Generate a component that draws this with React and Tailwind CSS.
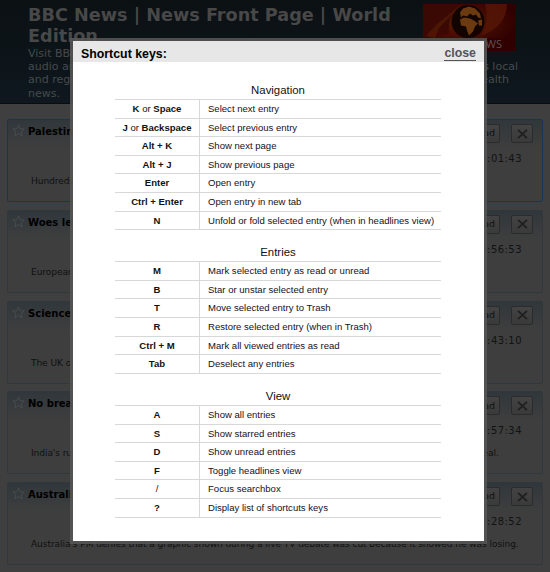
import React from "react";

const SECTIONS = [
  {
    title: "Navigation",
    rows: [
      [["K", " or ", "Space"], "Select next entry"],
      [["J", " or ", "Backspace"], "Select previous entry"],
      [["Alt + K"], "Show next page"],
      [["Alt + J"], "Show previous page"],
      [["Enter"], "Open entry"],
      [["Ctrl + Enter"], "Open entry in new tab"],
      [["N"], "Unfold or fold selected entry (when in headlines view)"],
    ],
  },
  {
    title: "Entries",
    rows: [
      [["M"], "Mark selected entry as read or unread"],
      [["B"], "Star or unstar selected entry"],
      [["T"], "Move selected entry to Trash"],
      [["R"], "Restore selected entry (when in Trash)"],
      [["Ctrl + M"], "Mark all viewed entries as read"],
      [["Tab"], "Deselect any entries"],
    ],
  },
  {
    title: "View",
    rows: [
      [["A"], "Show all entries"],
      [["S"], "Show starred entries"],
      [["D"], "Show unread entries"],
      [["F"], "Toggle headlines view"],
      [["/"], "Focus searchbox"],
      [["?"], "Display list of shortcuts keys"],
    ],
  },
];

const ENTRIES = [
  { title: "Palestinians", time: "20:01:43", left: "Hundreds", right: "", selected: true },
  { title: "Woes left", time: "19:56:53", left: "European", right: "" },
  { title: "Science", time: "19:43:10", left: "The UK over", right: "" },
  { title: "No breakthrough", time: "18:57:34", left: "India's ruling", right: "deal." },
  {
    title: "Australia",
    time: "18:28:52",
    left: "Australia's PM denies that a graphic shown during a live TV debate was cut because it showed he was losing.",
    right: "",
  },
];

const BLURB = [
  ["Visit BBC News", ""],
  ["audio and", "as local"],
  ["and regional", "health", "pr-[9px]"],
  ["news.", ""],
];

function Logo() {
  return (
    <svg className="mt-[4px] h-[47px] w-[93px] shrink-0" viewBox="0 0 93 47">
      <defs>
        <radialGradient id="glow" cx="0.4" cy="0.4" r="0.6">
          <stop offset="0" stopColor="#5c1a05" />
          <stop offset="0.6" stopColor="#400a02" />
          <stop offset="1" stopColor="#300000" />
        </radialGradient>
      </defs>
      <rect width="93" height="47" fill="url(#glow)" />
      <path d="M0 0H36Q24 12 26 30L0 34Z" fill="#3b0903" />
      <path d="M3 32L14 20L38 1L16 24L12 34Z" fill="#5e2408" opacity=".5" />
      <path d="M62 0H84Q84 22 58 32Q67 16 62 0Z" fill="#561706" opacity=".8" />
      <circle cx="45" cy="17.5" r="16.5" fill="#120400" />
      <g transform="translate(0 1.5)" fill="#6b3a10">
        <path d="M37 7L40 3L46 1L52 3L57 8L58 13L55 12L53 9L50 10L47 8L44 11L40 10L38 12Z" />
        <path d="M37 14L41 12L47 13L51 15L55 18L52 21L50 26L46 30L44 25L43 21L38 20Z" />
        <path d="M55 15L59 14L59 20L56 20Z" />
      </g>
      <rect y="34" width="93" height="13" fill="#300000" />
      <text x="79" y="43.5" textAnchor="end" fontSize="11" fontFamily="Noto Sans, sans-serif" fill="#5d4b4b">NEWS</text>
    </svg>
  );
}

function Star() {
  return (
    <svg className="h-[13px] w-[13px] shrink-0" viewBox="0 0 13 13" fill="none" stroke="#4b5052" strokeWidth=".8">
      <path d="M6.5 .8L8.1 4.7L12.3 5L9.1 7.7L10.1 11.9L6.5 9.6L2.9 11.9L3.9 7.7L.7 5L4.9 4.7Z" />
    </svg>
  );
}

function EntryCard({ entry }) {
  return (
    <article
      className={`h-[83px] w-[536px] overflow-hidden rounded-[2px] border bg-gradient-to-b from-[#30373b] via-[#3a3c3d] via-25% to-[#3e3e3e] to-35% ${
        entry.selected ? "border-[#1b3450]" : "border-[#30383b]"
      }`}
    >
      <div className="flex h-[25px] items-start pl-[4px] pr-[9px] pt-[4px]">
        <Star />
        <h2 className="ml-[3px] flex-1 whitespace-nowrap text-[10px] leading-[15px] font-bold text-black">{entry.title}</h2>
        <div className="flex h-[19px] w-[74px] items-center justify-end rounded-[2px] border border-[#2b2b2b] bg-gradient-to-b from-[#434343] to-[#3a3a3a] pr-[4px] text-[9.5px] whitespace-nowrap text-[#111]">
          Mark as read
        </div>
        <div className="ml-[11px] flex h-[19px] w-[22px] items-center justify-center rounded-[2px] border border-[#2b2b2b] bg-gradient-to-b from-[#434343] to-[#3a3a3a]">
          <svg className="h-[10px] w-[11px]" viewBox="0 0 11 10" stroke="#1f1f1f" strokeWidth="1.8">
            <path d="M1 .8L10 9.2M10 .8L1 9.2" />
          </svg>
        </div>
      </div>
      <div className="mt-[6px] pr-[20px] text-right text-[10px] leading-[16px] tracking-[.45px] text-[#121212]">{entry.time}</div>
      <div className={`mt-[7px] flex w-[511px] justify-between pl-[23px] text-[9.05px] leading-[14px] whitespace-nowrap text-[#101010] ${entry.right ? "pr-[20px]" : ""}`}>
        <span className="tracking-[-0.07px]">{entry.left}</span>
        <span>{entry.right}</span>
      </div>
    </article>
  );
}

function ShortcutSection({ section }) {
  return (
    <section>
      <h3 className="h-[18px] text-center text-[11.4px] leading-[18px] text-[#111]">{section.title}</h3>
      <div className="border-t border-[#d8d8d8]">
        {section.rows.map(([keys, label]) => (
          <div key={label} className="flex h-[18.62px] border-b border-[#d8d8d8] text-[9.55px] leading-[18px] whitespace-nowrap text-[#16101c]">
            <div className="w-[85px] border-r border-[#d8d8d8] text-center">
              {keys.map((k) => (
                <span key={k} className={k === " or " ? "whitespace-pre" : k === "/" ? "" : "font-bold text-[#111]"}>{k}</span>
              ))}
            </div>
            <div className="pl-[8px]">{label}</div>
          </div>
        ))}
      </div>
    </section>
  );
}

export default function App() {
  return (
    <div className="relative h-[572px] w-[550px] overflow-hidden bg-[#3f3f3f] font-['DejaVu_Sans',sans-serif]">
      <header className="flex h-[104px] justify-between border-b border-[#080d10] bg-gradient-to-b from-[#0b1013] to-[#0e181e] pl-[28px] pr-[34px]">
        <div className="w-[394px] shrink-0 pt-[5px]">
          <h1 className="text-[17.65px] leading-[20.5px] font-bold whitespace-nowrap text-[#484848]">
            BBC News | News Front Page | World
            <br />
            Edition
          </h1>
          <div className="mt-[1px] w-[490px] text-[11px] leading-[13.2px] text-[#454a4d]">
            {BLURB.map(([left, right, pad]) => (
              <div key={left} className={`flex justify-between ${pad || ""}`}>
                <span>{left}</span>
                <span>{right}</span>
              </div>
            ))}
          </div>
        </div>
        <Logo />
      </header>
      <main className="flex flex-col gap-[7.75px] pl-[7px] pt-[15px]">
        {ENTRIES.map((entry) => (
          <EntryCard key={entry.title} entry={entry} />
        ))}
      </main>
      <div
        role="dialog"
        className="absolute top-[38px] left-[70px] h-[506px] w-[417px] border-[3px] border-[#555]/90 font-['Liberation_Sans',Arial,sans-serif]"
      >
        <div className="h-full bg-white">
          <div className="flex h-[21px] items-center justify-between bg-[#e7e7e7] pl-[8px] pr-[8px] text-[12.35px] leading-[20px] font-bold">
            <span className="pt-[4px] text-black">Shortcut keys:</span>
            <a className="mt-[4px] border-b border-[#555] leading-[14px] text-[#555]">close</a>
          </div>
          <div className="flex w-[368px] flex-col gap-[13px] pt-[19px] pl-[42px]">
            {SECTIONS.map((section) => (
              <ShortcutSection key={section.title} section={section} />
            ))}
          </div>
        </div>
      </div>
    </div>
  );
}
